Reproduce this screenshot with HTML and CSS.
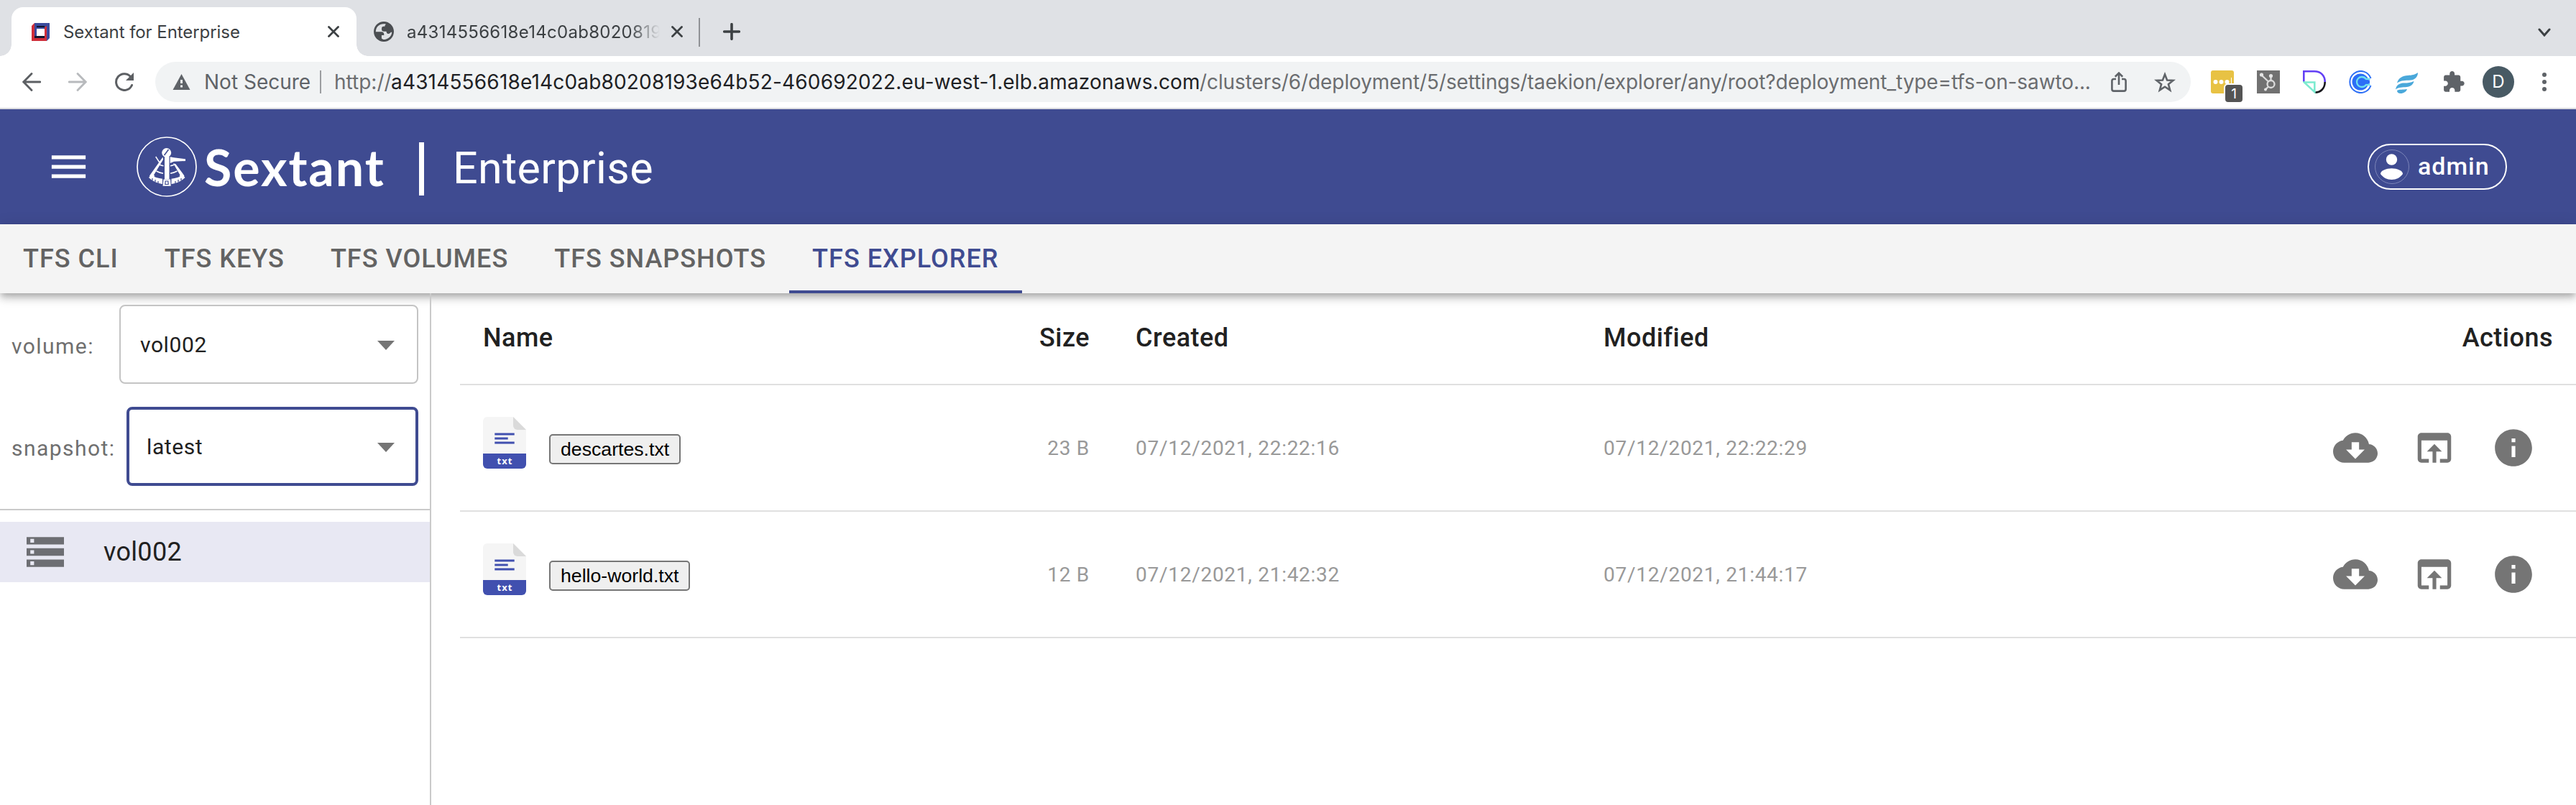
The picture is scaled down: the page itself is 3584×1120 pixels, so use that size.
FILE: index.html
```html
<!DOCTYPE html>
<html lang="en">
<head>
<meta charset="utf-8">
<title>Sextant for Enterprise</title>
<link rel="stylesheet" href="styles.css">
</head>
<body>
<svg class="defs" width="0" height="0" aria-hidden="true">
  <symbol id="close" viewBox="0 0 16 16"><path d="M1.5 1.5l13 13M14.5 1.5l-13 13" fill="none" stroke="currentColor" stroke-width="2.8" stroke-linecap="round"/></symbol>
  <symbol id="cloud" viewBox="0 0 24 24"><path d="M19.35 10.04C18.67 6.59 15.64 4 12 4 9.11 4 6.6 5.64 5.35 8.04 2.34 8.36 0 10.91 0 14c0 3.31 2.69 6 6 6h13c2.76 0 5-2.24 5-5 0-2.64-2.05-4.78-4.65-4.96zM17 13l-5 5-5-5h3V9h4v4h3z"/></symbol>
  <symbol id="open" viewBox="0 0 24 24"><path d="M19 4H5c-1.11 0-2 .9-2 2v12c0 1.1.89 2 2 2h4v-2H5V8h14v10h-4v2h4c1.1 0 2-.9 2-2V6c0-1.1-.89-2-2-2zm-7 6l-4 4h3v6h2v-6h3l-4-4z"/></symbol>
  <symbol id="info" viewBox="0 0 24 24"><path d="M12 2C6.48 2 2 6.48 2 12s4.48 10 10 10 10-4.48 10-10S17.52 2 12 2zm1 15h-2v-6h2v6zm0-8h-2V7h2v2z"/></symbol>
  <symbol id="sheet" viewBox="0 0 60 72">
    <path d="M6 0h36l18 18v34H0V6a6 6 0 0 1 6-6z" fill="#f5f5f5"/>
    <path d="M42 0l18 18H48a6 6 0 0 1-6-6z" fill="#dadada"/>
    <path d="M16.3 24h27.4M16.3 30h18.4M16.3 36h27.4" stroke="#4150af" stroke-width="3.2"/>
    <path d="M0 51h60v15a6 6 0 0 1-6 6H6a6 6 0 0 1-6-6z" fill="#4150af"/>
  </symbol>
</svg>

<header class="browser">
  <div class="tabstrip">
    <div class="btab btab-active">
      <svg class="favicon" viewBox="0 0 25 25"><path d="M4 0h21v21l-4 4h-9L4 6z" fill="#3a4a9c"/><path d="M0 4l4-4v20h14V6l3-2v21H0z" fill="#cf2e3a"/><path d="M7 4h14l-4 4v10l-2 0H4l0 3h14V6H7z" fill="#10152e"/><path d="M4 4h3v14H4zM18 0h3v4l-3 2z" fill="#3a4a9c"/><path d="M18 6l3-2v17h-3z" fill="#cf2e3a"/><path d="M7 8h11v10H7z" fill="#fff"/></svg>
      <span class="btab-title">Sextant for Enterprise</span>
      <svg class="close"><use href="#close"/></svg>
    </div>
    <div class="btab btab-idle">
      <svg class="globe" viewBox="2 2 20 20"><path fill="#4b4e52" d="M12 2C6.48 2 2 6.48 2 12s4.48 10 10 10 10-4.48 10-10S17.52 2 12 2z"/><path fill="#dfe1e5" d="M4 12.2h5.6c1.7 0 2.6 1 2.6 2.5v.8h-2.4v3.200l1.700 1.200c4.700 0 8.400-3.400 8.500-7.400l-1 0c-.8 1.300-2 1.900-3.300 1.400-.8-.3-1-1-1.200-2.100h-2.600c-1.200 0-2-.8-2-2V8.600c0-1 .8-1.700 1.800-1.700h1.300c0-1.200.5-1.900 1.200-2.300C9 3.200 4 6.500 4 12.200z"/></svg>
      <span class="btab-title fade">a4314556618e14c0ab8020819</span>
      <svg class="close"><use href="#close"/></svg>
    </div>
    <i class="tab-sep"></i>
    <svg class="plus" viewBox="0 0 24 24"><path d="M12 1.700v20.600M1.700 12h20.600" stroke="#3c4043" stroke-width="3.600" stroke-linecap="round"/></svg>
    <svg class="chevron" viewBox="0 0 18 12"><path d="M2 2l7 8 7-8" fill="none" stroke="#3c4043" stroke-width="3" stroke-linecap="round"/></svg>
  </div>
  <div class="toolbar">
    <svg class="nav" viewBox="0 0 26 26"><path d="M25 13H2M13 1.500L1.800 13 13 24.500" fill="none" stroke="#5c5f63" stroke-width="2.800" stroke-linecap="round"/></svg>
    <svg class="nav nav-off" viewBox="0 0 26 26"><path d="M1 13h23M13 1.500L24.200 13 13 24.500" fill="none" stroke="#b8babd" stroke-width="2.800" stroke-linecap="round"/></svg>
    <svg class="reload" viewBox="0 0 28 26"><path d="M24.500 17.500A11.400 11.400 0 1 1 22.500 5.500" fill="none" stroke="#5c5f63" stroke-width="3" stroke-linecap="round"/><path d="M27 0v11H16z" fill="#5c5f63"/></svg>
    <div class="omnibox">
      <svg class="warn" viewBox="0 0 24 22"><path d="M12 0l12 22H0z" fill="#5f6368"/><path d="M10.500 8h3v5h-3zM10.500 15.500h3v3h-3z" fill="#f1f3f4"/></svg>
      <span class="insecure">Not Secure</span>
      <i class="omni-sep"></i>
      <span class="scheme">http://</span><span class="host">a4314556618e14c0ab80208193e64b52-460692022.eu-west-1.elb.amazonaws.com</span><span class="path">/clusters/6/deployment/5/settings/taekion/explorer/any/root?deployment_type=tfs-on-sawto...</span>
      <svg class="share" viewBox="0 0 22 28"><path d="M7 10H4a2.600 2.600 0 0 0-2.600 2.600V24A2.600 2.600 0 0 0 4 26.600h14a2.600 2.600 0 0 0 2.600-2.600V12.600A2.600 2.600 0 0 0 18 10h-3M11 18V2M5.800 6.700L11 1.600l5.200 5.100" fill="none" stroke="#5f6368" stroke-width="2.600"/></svg>
      <svg class="star" viewBox="0 0 30 29"><path d="M15 3.500l3.100 8 8.400.4-6.600 5.300 2.300 8.200-7.200-4.700-7.200 4.700 2.300-8.200-6.600-5.300 8.400-.4z" fill="none" stroke="#5f6368" stroke-width="2.600"/></svg>
    </div>
    <div class="exts">
      <div class="ext-notes">
        <svg width="32" height="32" viewBox="0 0 32 32"><rect width="32" height="32" rx="3" fill="#e8c244"/><g fill="#fff"><circle cx="6.500" cy="16" r="3"/><circle cx="14.500" cy="16" r="3"/><circle cx="22.500" cy="16" r="3"/><path d="M28 10h1v10h-1z"/></g></svg>
        <span class="badge">1</span>
      </div>
      <svg width="32" height="32" viewBox="0 0 32 32"><rect width="32" height="32" fill="#717171"/><g stroke="#dcdcdc" fill="none" stroke-width="2.300"><circle cx="19.500" cy="19" r="5"/><path d="M19.500 14V8M16 15.500L7 7M15.500 23L11.500 27"/></g><g fill="#e4e4e4"><circle cx="19.500" cy="7.500" r="2.600"/><circle cx="6.500" cy="6" r="2.600"/><circle cx="12" cy="26.500" r="2"/></g></svg>
      <svg width="32" height="32" viewBox="0 0 32 32" fill="none" stroke-width="2.600"><path d="M1.300 16V1.300H16c9 0 14.700 6 14.700 14.700" stroke="#6340f5"/><path d="M30.700 16c0 9-6 14.700-14 14.700" stroke="#17171c"/><path d="M1.800 16.500h14.500v13.500z" stroke="#7cebd0"/></svg>
      <svg width="32" height="32" viewBox="0 0 32 32" fill="none"><circle cx="16" cy="16" r="11.500" fill="#2b6ef6"/><path d="M30.500 11A15 15 0 1 0 30.500 21" stroke="#2b6ef6" stroke-width="2"/><path d="M29.500 12h-5.500c-1.500-2-3.500-3-6-3a7 7 0 0 0 0 14c2.500 0 4.500-1 6-3h5.500" stroke="#6fe0ee" stroke-width="2.300"/><path d="M29 13.500h-6v5h6z" fill="#2b6ef6"/></svg>
      <svg width="32" height="32" viewBox="0 0 32 32" fill="#4aa8da"><path d="M32 3c0 6-4 10-10 10.500-8 .5-13 0-19 4C5 10 11 7.500 18 7c6-.4 10-1 14-4z"/><path d="M26.500 15c-1 5-5 7.500-10 8-6 .5-11 0-15.500 3.500C2 20 7 17.500 13 17.500c5 0 9-.5 13.500-2.500z"/><path d="M17 26c-1 3.500-5 6-9 6-3 0-5-1.500-5-4 3-2 8-1 14-2z"/></svg>
      <svg width="38" height="38" viewBox="0 0 24 24" fill="#5f6368"><path d="M20.500 11H19V7c0-1.100-.9-2-2-2h-4V3.500C13 2.120 11.880 1 10.500 1S8 2.120 8 3.500V5H4c-1.100 0-1.990.9-1.990 2v3.800H3.500c1.490 0 2.700 1.210 2.700 2.700s-1.210 2.700-2.700 2.700H2V20c0 1.100.9 2 2 2h3.800v-1.500c0-1.490 1.210-2.700 2.700-2.700 1.490 0 2.700 1.210 2.700 2.700V22H17c1.100 0 2-.9 2-2v-4h1.500c1.380 0 2.500-1.120 2.500-2.500S21.880 11 20.500 11z" transform="translate(1.500 1.700) scale(.86)"/></svg>
    </div>
    <span class="avatar">D</span>
    <svg class="dots" viewBox="0 0 6 26"><g fill="#5f6368"><circle cx="3" cy="3" r="3"/><circle cx="3" cy="13" r="3"/><circle cx="3" cy="23" r="3"/></g></svg>
  </div>
</header>

<div class="appbar">
  <svg class="burger" viewBox="0 0 24 24"><path d="M3 18h18v-2H3v2zm0-5h18v-2H3v2zm0-7v2h18V6H3z" fill="#fff"/></svg>
  <svg class="logo" viewBox="0 0 84 84">
    <circle cx="42" cy="42" r="41" fill="none" stroke="#fff" stroke-width="1.700"/>
    <g fill="#fff">
      <circle cx="41.700" cy="22.500" r="6.500"/>
      <path d="M39 28h6.500v31.500H39z"/>
      <path d="M46.700 28.300L52 29.300l16 2V34l-16 .8-5.300 2.200z"/>
      <path d="M36.500 28.500L18 54.500l3 3 4.500-2.500-1.500-1.500 13-21.500z"/>
      <path d="M51 37.300l3.500 1L66.500 54.500l-3 3-4-2.500 1-1.500z"/>
      <path d="M20 53.500c5 3 10 4.500 16 5.200V66c-7-1-14-4-19-9z"/>
      <path d="M64.500 53.500c-5 3-10 4.500-16 5.200V66c7-1 14-4 19-9z"/>
      <path d="M37.500 59.500h9.500l.7 9.300H36.500z"/>
    </g>
    <path d="M26.700 28l5.500 8.500M31 38.500q3 1.800 6.500 2.200M27.500 48q4.500 2.500 9.500 3.300M47 40.800q3.500-.4 6.500-2.500M47 51.300q5-.8 9.500-3.300" fill="none" stroke="#fff" stroke-width="1.500"/>
    <path d="M38.500 26l6-8" stroke="#3f4b91" stroke-width="1.500"/>
    <path d="M22 61v-3M26 63v-3M30 65v-3M54 65v-3M58 63v-3M62 61v-3M39.800 66.500l.4-4.500h3.600l.4 4.500z" fill="none" stroke="#3f4b91" stroke-width="1.200"/>
  </svg>
  <span class="brand">Sextant</span>
  <i class="brand-sep"></i>
  <span class="edition">Enterprise</span>
  <div class="user">
    <svg class="user-icon" viewBox="0 0 48 64"><circle cx="24" cy="32" r="23.500" fill="none" stroke="#7b84b8" stroke-width="1"/><g fill="#fff"><circle cx="23.500" cy="22" r="7.700"/><path d="M8 42c0-4.500 8-7.700 15.500-7.700S39 37.500 39 42c-3.500 5-9 8-15.500 8S11.500 47 8 42z"/></g></svg>
    <span>admin</span>
  </div>
</div>

<nav class="tabs">
  <span class="tab">TFS CLI</span>
  <span class="tab">TFS KEYS</span>
  <span class="tab">TFS VOLUMES</span>
  <span class="tab">TFS SNAPSHOTS</span>
  <span class="tab tab-on">TFS EXPLORER</span>
</nav>

<main class="explorer">
  <aside class="side">
    <div class="filters">
      <div class="field"><label>volume:</label><div class="select select-volume"><span>vol002</span><i class="caret"></i></div></div>
      <div class="field"><label>snapshot:</label><div class="select select-focus"><span>latest</span><i class="caret"></i></div></div>
    </div>
    <div class="tree-item">
      <svg class="storage" viewBox="2 4 20 16"><path fill="#6d6e73" d="M2 20h20v-4H2v4zm2-3h2v2H4v-2zM2 4v4h20V4H2zm4 3H4V5h2v2zm-4 7h20v-4H2v4zm2-3h2v2H4v-2z"/></svg>
      <span>vol002</span>
    </div>
  </aside>
  <section class="files">
    <div class="row head"><span>Name</span><span class="num">Size</span><span>Created</span><span>Modified</span><span class="num">Actions</span></div>
    <div class="row">
      <div class="name"><svg class="file" viewBox="0 0 60 72"><use href="#sheet"/><text x="30.5" y="66" class="file-ext">txt</text></svg><button>descartes.txt</button></div>
      <span class="num">23 B</span><span>07/12/2021, 22:22:16</span><span>07/12/2021, 22:22:29</span>
      <div class="actions"><svg><use href="#cloud"/></svg><svg><use href="#open"/></svg><svg><use href="#info"/></svg></div>
    </div>
    <div class="row">
      <div class="name"><svg class="file" viewBox="0 0 60 72"><use href="#sheet"/><text x="30.5" y="66" class="file-ext">txt</text></svg><button>hello-world.txt</button></div>
      <span class="num">12 B</span><span>07/12/2021, 21:42:32</span><span>07/12/2021, 21:44:17</span>
      <div class="actions"><svg><use href="#cloud"/></svg><svg><use href="#open"/></svg><svg><use href="#info"/></svg></div>
    </div>
  </section>
</main>
</body>
</html>
```
FILE: styles.css
```css
* { box-sizing: border-box; }
body { margin: 0; height: 1120px; display: flex; flex-direction: column; overflow: hidden; background: #fff; font-family: Roboto, sans-serif; white-space: nowrap; }
svg { display: block; flex: none; }
i { flex: none; }
.defs { position: absolute; }

/* Browser chrome */
.browser { font-family: Inter, sans-serif; border-bottom: 2px solid #d9dade; }
.tabstrip { height: 78px; padding: 10px 35px 0 16px; background: #dfe1e5; display: flex; }
.btab { height: 68px; display: flex; align-items: center; font-size: 24px; color: #3c4043; }
.btab-active { position: relative; width: 480px; padding: 0 24px 0 28px; background: #fff; border-radius: 16px 16px 0 0; letter-spacing: -.06px; }
.btab-active::before, .btab-active::after { content: ""; position: absolute; bottom: 0; width: 16px; height: 16px; }
.btab-active::before { left: -16px; background: radial-gradient(circle at 0 0, transparent 15.5px, #fff 16px); }
.btab-active::after { right: -16px; background: radial-gradient(circle at 100% 0, transparent 15.5px, #fff 16px); }
.favicon { width: 25px; height: 25px; margin-right: 19px; }
.close { width: 16px; height: 16px; margin-left: auto; }
.btab-idle { width: 476px; padding: 0 22px 0 24px; letter-spacing: .28px; }
.globe { width: 28px; height: 28px; margin-right: 18px; }
.fade { width: 360px; -webkit-mask-image: linear-gradient(90deg, #000 310px, transparent 352px); mask-image: linear-gradient(90deg, #000 310px, transparent 352px); }
.tab-sep { width: 2px; height: 40px; margin-top: 15px; background: #8f9195; }
.plus { width: 24px; height: 24px; margin: 22px 0 0 32px; }
.chevron { width: 18px; height: 12px; margin: 29px 0 0 auto; }
.toolbar { height: 72px; padding-left: 31px; display: flex; align-items: center; background: #fff; }
.nav { width: 26px; height: 26px; }
.nav-off { margin-left: 38px; }
.reload { width: 28px; height: 26px; margin-left: 38px; }
.omnibox { width: 2832px; height: 56px; margin-left: 29px; padding: 0 21px 0 24px; border-radius: 28px; background: #f1f3f4; display: flex; align-items: center; font-size: 28px; color: #6b6d70; }
.warn { width: 25px; height: 22px; margin-right: 19px; }
.insecure { width: 161px; color: #5f6368; }
.omni-sep { width: 2px; height: 32px; margin-right: 18px; background: #9b9da0; }
.scheme { width: 79px; }
.host { width: 1125px; color: #202124; letter-spacing: .17px; }
.path { letter-spacing: -.1px; }
.share { width: 22px; height: 28px; margin-left: auto; }
.star { width: 30px; height: 29px; margin-left: 38px; }
.exts { display: flex; align-items: center; gap: 32px; margin-left: 28px; }
.exts > :last-child { margin-left: -1px; }
.ext-notes { position: relative; }
.badge { position: absolute; left: 18px; top: 18px; width: 28px; height: 28px; border: 2px solid #fff; border-radius: 6px; background: #545454; color: #fff; font-size: 19px; line-height: 26px; text-align: center; }
.avatar { width: 44px; height: 44px; margin-left: 21px; border-radius: 50%; background: #485a64; color: #fff; font-size: 24px; line-height: 44px; text-align: center; }
.dots { width: 6px; height: 26px; margin-left: 39px; }

/* Application bar */
.appbar { height: 160px; padding: 0 96px 0 64px; display: flex; align-items: center; background: #3f4b91; color: #fff; }
.burger { width: 63px; height: 64px; }
.logo { width: 84px; height: 84px; margin-left: 63px; }
.brand { width: 299px; margin-left: 10px; font: 700 70px/84px Lato, sans-serif; letter-spacing: 1.9px; }
.brand-sep { width: 7px; height: 74px; margin-top: 6px; background: #fff; }
.edition { margin: 3px 0 0 40px; font-size: 61px; letter-spacing: .4px; }
.user { width: 194px; height: 64px; margin-left: auto; padding-left: 8px; border: 2px solid #fff; border-radius: 32px; display: flex; align-items: center; gap: 12px; font-size: 34px; font-weight: 500; letter-spacing: 1px; }
.user span { margin-top: -2px; }
.user-icon { width: 48px; height: 64px; }

/* Section tabs */
.tabs { position: relative; height: 96px; display: flex; background: #f4f4f4; box-shadow: 0 4px 8px -2px rgba(0,0,0,.2), 0 8px 10px rgba(0,0,0,.14), 0 2px 20px rgba(0,0,0,.12); }
.tab { padding: 0 32px; font-size: 36px; font-weight: 500; line-height: 96px; letter-spacing: 1.01px; color: #636363; }
.tab-on { color: #3f4b91; box-shadow: inset 0 -4px #3f4b91; }

/* Explorer */
.explorer { flex: 1; display: flex; }
.side { position: relative; width: 600px; border-right: 2px solid #cacaca; }
.filters { padding: 16px 16px 32px; border-bottom: 2px solid #cacaca; display: flex; flex-direction: column; gap: 32px; }
.field { display: flex; justify-content: space-between; align-items: center; }
.field label { padding-top: 5px; font-size: 30px; letter-spacing: 1.45px; color: #6f6f6f; }
.select { width: 406px; height: 110px; padding: 0 31px 0 26px; border: 4px solid #3f4b91; border-radius: 8px; display: flex; align-items: center; justify-content: space-between; font-size: 30px; letter-spacing: .6px; color: #212121; }
.select-volume { width: 416px; padding: 0 31px 0 27px; border: 2px solid #c4c4c4; }
.select-focus { padding-right: 29px; padding-left: 24px; }
.caret { border: 12.5px solid transparent; border-top: 13px solid #757575; border-bottom: 0; margin-top: 3px; }
.tree-item { height: 84px; margin-top: 16px; padding-left: 37px; display: flex; align-items: center; background: #e8e8f3; font-size: 36px; letter-spacing: .3px; color: #212121; }
.storage { width: 52px; height: 42px; margin-right: 55px; }
.files { flex: 1; padding-left: 40px; }
.row { height: 176px; display: grid; grid-template-columns: 608px 300px 651px 651px 1fr; align-items: center; border-bottom: 2px solid #e0e0e0; font-size: 28px; letter-spacing: .73px; color: #999; }
.row > * { padding: 0 32px; }
.head { height: 128px; padding-bottom: 3px; font-size: 36px; font-weight: 500; letter-spacing: .5px; color: #212121; }
.num { text-align: right; }
.row .name { display: flex; align-items: flex-start; height: 86px; }
.file { width: 60px; height: 72px; margin-right: 32px; }
.file-ext { font: 700 13px "Open Sans", sans-serif; letter-spacing: 1px; fill: #fff; text-anchor: middle; }
button { height: 42px; margin: 24px 0 0; padding: 0 14px; border: 2px solid #767676; border-radius: 5px; background: #efefef; color: #000; font: 26.670px/38px "Liberation Sans", Arial, sans-serif; }
.row .actions { display: flex; justify-content: flex-end; gap: 48px; padding-right: 56px; }
.actions svg { width: 62px; height: 62px; fill: #757575; }
```
